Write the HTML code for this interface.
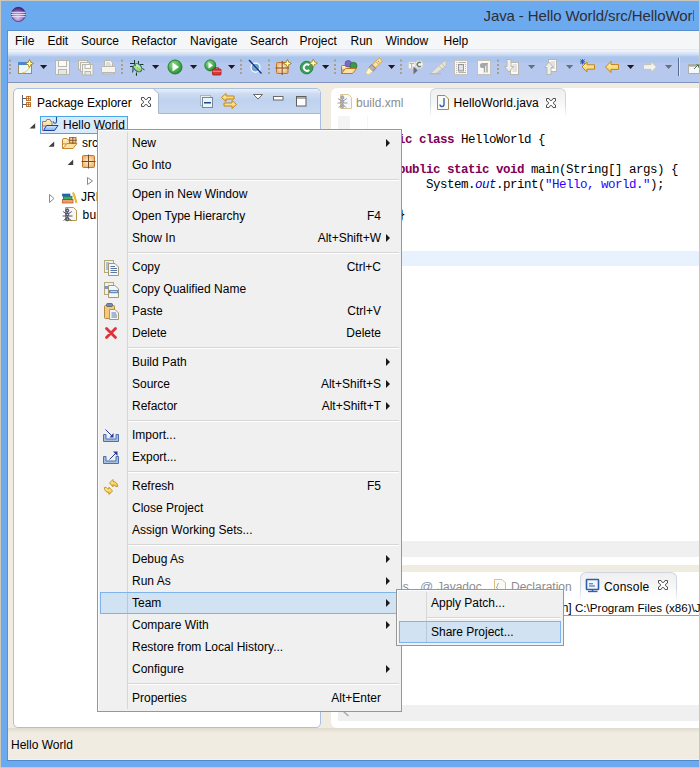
<!DOCTYPE html>
<html><head><meta charset="utf-8">
<style>
*{box-sizing:border-box;margin:0;padding:0}
html,body{width:700px;height:768px;overflow:hidden;background:#f0ece1;font-family:"Liberation Sans",sans-serif;font-size:12px;color:#000}
.a{position:absolute}
svg{display:block;position:absolute;left:0;top:0}
.t{position:absolute;white-space:nowrap;line-height:14px}
#frame{left:0;top:0;width:700px;height:768px;background:#6caaf0;border-top:1px solid #cdc6ba;border-left:1px solid #cdc6ba;border-right:1px solid #cdc6ba;border-bottom:1px solid #cdc6ba}
#title{left:483.5px;top:6.5px;width:210.5px;overflow:hidden;font-size:15px;letter-spacing:-0.1px;line-height:18px;color:#2e2e36}
#client{left:7px;top:30px;width:692px;height:730px;background:#f0ece1;border-top:1px solid #5a8fd0;border-left:1px solid #5a8fd0}
#menubar{left:8px;top:31px;width:691px;height:18px;background:#f5f6f7}
#menubar span{position:absolute;top:3px;white-space:nowrap;line-height:14px}
#toolbar{left:8px;top:49px;width:691px;height:34px;background:linear-gradient(#e6e9ee 0px,#e6e9ee 1px,#f1f4fb 1px,#eef2fb 2px,#c9d9f2 6px,#abc5ec 8px,#abc5ec 13px,#b6c8ed 14px,#b6c8ed 33px,#7f94be 33px)}
#pe{left:13px;top:88px;width:308px;height:640px;background:#fff;border:1px solid #a9c0e4;border-radius:5px}
#pehead{left:158px;top:89px;width:162px;height:25px;background:linear-gradient(#e7eefa 0px,#cfdcf2 6px,#bfd3ef 12px,#c6d6f0 24px);border-bottom:1px solid #a6b6d4;border-radius:0 4px 0 0}
#ed{left:331px;top:88px;width:368px;height:477px;background:#fff;border-radius:6px 0 0 6px}
#con{left:331px;top:572px;width:368px;height:156px;background:#fff;border-radius:6px 0 0 6px}
#menu{left:97px;top:129px;width:305px;height:583px;background:#f0f0f0;border:1px solid #979797;box-shadow:inset 1px 1px 0 #fbfbfb}
.mi{position:absolute;left:132px;white-space:nowrap;line-height:22px;height:22px}
.acc{position:absolute;left:200px;width:181px;text-align:right;white-space:nowrap;line-height:22px;height:22px}
.arr{position:absolute;left:386px;width:0;height:0;border-top:4px solid transparent;border-bottom:4px solid transparent;border-left:4px solid #1a1a1a}
.sep{position:absolute;left:128px;width:271px;height:2px;background:#d7d7d7;border-bottom:1px solid #fff}
#submenu{left:396px;top:589px;width:168px;height:57px;background:#f0f0f0;border:1px solid #979797;box-shadow:inset 1px 1px 0 #fbfbfb}
.hl{position:absolute;background:#d1e2f2;border:1px solid #7eb4ea}
.code{font-family:"Liberation Mono",monospace;font-size:12.5px;letter-spacing:-0.5px;line-height:15px;white-space:pre;position:absolute}
.kw{color:#7f0055;font-weight:bold}
.str{color:#2a00ff}
</style></head><body>
<div class="a" id="frame"></div>
<div class="t" id="title">Java - Hello World/src/HelloWorld.java - Eclipse</div>
<div class="a" style="left:699px;top:0;width:1px;height:768px;background:#cdc6ba"></div>
<div class="a" id="client"></div>
<div class="a" id="menubar">
<span style="left:7px">File</span><span style="left:39.5px">Edit</span><span style="left:73px">Source</span><span style="left:123.5px">Refactor</span><span style="left:182px">Navigate</span><span style="left:242px">Search</span><span style="left:291.5px">Project</span><span style="left:342.5px">Run</span><span style="left:377.5px">Window</span><span style="left:435.5px">Help</span>
</div>
<div class="a" id="toolbar"></div>

<div class="a" id="pe"></div>
<div class="t" style="left:37px;top:96px">Package Explorer</div>
<div class="a" style="left:40px;top:116px;width:88px;height:18px;background:#d7ebfa;border:1px solid #4aa6e6"></div>
<div class="t" style="left:63px;top:118px">Hello World</div>
<div class="t" style="left:82px;top:136px">src</div>
<div class="t" style="left:81px;top:190px">JRE System Library</div>
<div class="t" style="left:82.5px;top:208px;letter-spacing:0.3px">build.xml</div>

<div class="a" id="ed"></div>
<div class="a" style="left:430px;top:88px;width:136px;height:28px;border:1px solid #cfd6e2;border-bottom:none;border-radius:6px 6px 0 0;background:linear-gradient(#efefef,#fff)"></div>
<div class="a" style="left:429px;top:104px;width:138px;height:14px;background:linear-gradient(rgba(255,255,255,0),#fff)"></div>
<div class="a" style="left:338px;top:116px;width:12px;height:425px;background:#f4f4f4"></div>
<div class="a" style="left:367px;top:116px;width:1px;height:425px;background:#f5f5f5"></div>
<div class="t" style="left:356px;top:96px;color:#8c8c8c">build.xml</div>
<div class="t" style="left:453.5px;top:96px;letter-spacing:0.1px">HelloWorld.java</div>
<div class="a" style="left:368px;top:251px;width:331px;height:15px;background:#e8f2fe"></div>
<div class="code" style="left:370px;top:133px"><span class="kw">public class</span> HelloWorld {

    <span class="kw">public static void</span> main(String[] args) {
        System.<i style="color:#0000c0">out</i>.print(<span class="str">"Hello, world."</span>);

    }
}</div>
<div class="a" style="left:332px;top:541px;width:367px;height:16px;background:#f0f0f0"></div>

<div class="a" id="con"></div>
<div class="a" style="left:580px;top:572px;width:97px;height:28px;border:1px solid #cfd6e2;border-bottom:none;border-radius:6px 6px 0 0;background:linear-gradient(#efefef,#fff)"></div>
<div class="a" style="left:579px;top:588px;width:99px;height:14px;background:linear-gradient(rgba(255,255,255,0),#fff)"></div>
<div class="t" style="left:358px;top:580px;color:#8c8c8c">Problems</div>
<div class="t" style="left:420px;top:580px;color:#7f9ab8;font-size:13px">@</div>
<div class="t" style="left:437px;top:580px;color:#8c8c8c">Javadoc</div>
<div class="t" style="left:511px;top:580px;color:#8c8c8c">Declaration</div>
<div class="t" style="left:604px;top:580px;letter-spacing:0.2px">Console</div>
<div class="t" style="left:200px;width:375px;text-align:right;top:601px">&lt;terminated&gt; HelloWorld [Java Application]&nbsp;</div><div class="t" style="left:575px;top:601px;font-size:11.6px">C:\Program Files (x86)\Java\jre7\bin\javaw.exe</div>
<div class="a" style="left:332px;top:615px;width:367px;height:1px;background:#a0a0a0"></div>
<div class="a" style="left:338px;top:705px;width:361px;height:16px;background:#f0f0f0"></div>

<div class="t" style="left:11px;top:738px">Hello World</div>
<div class="a" style="left:0;top:760px;width:700px;height:7px;background:#6caaf0;border-left:1px solid #cdc6ba;border-right:1px solid #cdc6ba"></div>
<div class="a" style="left:7px;top:760px;width:692px;height:1px;background:#4f88cc"></div>
<div class="a" style="left:0;top:767px;width:700px;height:1px;background:#cdc6ba"></div>
<div class="a" style="left:8px;top:759px;width:691px;height:1px;background:#f8f1e4"></div>
<div class="a" style="left:8px;top:728px;width:691px;height:5px;background:linear-gradient(#dfdbcf,#f0ece1)"></div>

<svg width="700" height="768" viewBox="0 0 700 768">
<defs>
<radialGradient id="ecl" cx="0.45" cy="0.75" r="0.75"><stop offset="0" stop-color="#d8c4ee"/><stop offset="0.6" stop-color="#8a64bd"/><stop offset="1" stop-color="#3c1f6e"/></radialGradient>
<radialGradient id="grn" cx="0.4" cy="0.35" r="0.7"><stop offset="0" stop-color="#8fe08f"/><stop offset="1" stop-color="#1f8a2a"/></radialGradient>
<linearGradient id="fold" x1="0" y1="0" x2="0" y2="1"><stop offset="0" stop-color="#fff3c8"/><stop offset="1" stop-color="#f2c470"/></linearGradient>
<linearGradient id="arrY" x1="0" y1="0" x2="0" y2="1"><stop offset="0" stop-color="#fff8c0"/><stop offset="1" stop-color="#f6c64a"/></linearGradient>
<g id="grip"><rect x="0" y="0" width="2" height="2"/><rect x="0" y="4.5" width="2" height="2"/><rect x="0" y="8.5" width="2" height="2"/><rect x="0" y="12.5" width="2" height="2"/></g>
<g id="spark"><path d="M0,-4 L1.3,-1.3 L4,0 L1.3,1.3 L0,4 L-1.3,1.3 L-4,0 L-1.3,-1.3Z" fill="#f8e070" stroke="#a07a10" stroke-width="0.8"/><path d="M0,-2.5V2.5M-2.5,0H2.5" stroke="#fff" stroke-width="0.9"/></g>
<g id="closex"><path d="M0.5,0.5H3L4.3,2.5H5.7L7,0.5H9.5V3L7.5,4.3V5.7L9.5,7V9.5H7L5.7,7.5H4.3L3,9.5H0.5V7L2.5,5.7V4.3L0.5,3Z" fill="#fff" stroke="#505050" stroke-width="1"/></g>
</defs>
<!-- eclipse logo -->
<circle cx="18.4" cy="14.4" r="7.1" fill="url(#ecl)" stroke="#3a2068" stroke-width="0.7"/>
<rect x="11.3" y="11.8" width="14.2" height="1.1" fill="#efe6fa" opacity="0.9"/>
<rect x="11.1" y="13.9" width="14.6" height="1.1" fill="#efe6fa" opacity="0.9"/>
<rect x="11.4" y="16.1" width="14" height="1.1" fill="#efe6fa" opacity="0.9"/>
<!-- grips -->
<g fill="#a99f86">
<use href="#grip" x="9" y="59.5"/><use href="#grip" x="121" y="59.5"/><use href="#grip" x="240" y="59.5"/><use href="#grip" x="268" y="59.5"/><use href="#grip" x="334" y="59.5"/><use href="#grip" x="400" y="59.5"/><use href="#grip" x="497" y="59.5"/>
</g>
<!-- new wizard -->
<rect x="18.5" y="62.5" width="13" height="11" fill="#eaf7fd" stroke="#a08a58"/>
<rect x="18" y="62" width="9" height="3" fill="#4a88c6"/>
<path d="M22,73 Q29,72 29.5,65" fill="none" stroke="#f0c850" stroke-width="1"/>
<use href="#spark" x="29.5" y="63.5"/>
<!-- dropdowns -->
<g fill="#1c1c1c">
<path d="M40,65H47.2L43.6,69Z"/><path d="M152,65H159.2L155.6,69Z"/><path d="M190,65H197.2L193.6,69Z"/><path d="M228,65H235.2L231.6,69Z"/><path d="M322,65H329.2L325.6,69Z"/><path d="M388,65H395.2L391.6,69Z"/><path d="M627,65H634.2L630.6,69Z"/>
</g>
<g fill="#6a6f7a">
<path d="M528,65H535.2L531.6,69Z"/><path d="M566,65H573.2L569.6,69Z"/><path d="M665,65H672.2L668.6,69Z"/>
</g>
<!-- save disabled -->
<g fill="#f4f4f2" stroke="#b9b6ad" stroke-width="1">
<rect x="55.5" y="60.5" width="14" height="14"/>
<rect x="58.5" y="60.5" width="8" height="6" fill="#fafafa"/>
<rect x="58.5" y="69.5" width="8" height="5" fill="#e6e6e3"/>
</g>
<!-- save all -->
<g fill="#f4f4f2" stroke="#b9b6ad" stroke-width="1">
<rect x="78.5" y="60.5" width="9" height="9"/>
<rect x="80.5" y="62.5" width="9" height="9"/>
<rect x="82.5" y="64.5" width="10.5" height="10.5"/>
<rect x="85" y="64.5" width="5.5" height="4" fill="#fafafa"/>
<rect x="85" y="71.5" width="5.5" height="3.5" fill="#e6e6e3"/>
</g>
<!-- print -->
<g fill="#f4f4f2" stroke="#b9b6ad" stroke-width="1">
<path d="M104.5,67.5V60.5H110.5L112.5,62.5V67.5"/>
<rect x="101.5" y="66.5" width="14" height="6" rx="1"/>
<rect x="102.5" y="72.5" width="12" height="1.5" fill="#dedcd5"/>
<path d="M106,63H110M106,65H111" stroke="#c8c6bf"/>
</g>
<!-- debug bug -->
<defs><linearGradient id="bugg" x1="0" y1="0" x2="1" y2="1"><stop offset="0" stop-color="#f0fcd0"/><stop offset="1" stop-color="#7cc040"/></linearGradient></defs>
<g stroke="#1a3a28" stroke-width="1" fill="none">
<path d="M134.5,60V64M130,63.5H134.5M138.5,61V64.5M130,66.5H133V71.5L132,72.3M136.5,72.5V75.5L135.8,74.8M140,64.5H143.5M142.5,68.5L144.5,69.8"/>
</g>
<ellipse cx="137.8" cy="67.8" rx="4.6" ry="3.4" transform="rotate(45 137.8 67.8)" fill="url(#bugg)" stroke="#1a6a88" stroke-width="1"/>
<circle cx="135.3" cy="65.2" r="0.8" fill="#2a7a30"/>
<path d="M137.5,67.5L140.5,70.5" stroke="#70b040" stroke-width="0.8" stroke-dasharray="1 0.8"/>
<!-- run -->
<circle cx="175" cy="67" r="7" fill="url(#grn)" stroke="#1f7a2a" stroke-width="0.9"/>
<path d="M172.5,62.5V71.5L179,67Z" fill="#fff"/>
<!-- external tools -->
<circle cx="210.3" cy="65.4" r="5.5" fill="url(#grn)" stroke="#1f7a2a" stroke-width="0.9"/>
<path d="M208.5,62.3V68.5L213,65.4Z" fill="#fff"/>
<rect x="212.5" y="69" width="8.5" height="6" rx="1" fill="#d83a3a" stroke="#a01818" stroke-width="0.8"/>
<path d="M215,69V67.8H218.5V69" fill="none" stroke="#a01818" stroke-width="0.9"/>
<path d="M212.5,71.3H221" stroke="#f8b0b0" stroke-width="0.7"/>
<!-- skip breakpoints -->
<circle cx="255.5" cy="67.6" r="4.5" fill="#6fa6c8" stroke="#fff" stroke-width="1.2"/>
<path d="M249,60L261.5,73.5" stroke="#1a2a90" stroke-width="1.3"/>
<!-- new package -->
<g>
<rect x="276.5" y="62.5" width="11.5" height="11" rx="1" fill="url(#pkg)" stroke="#c27430" stroke-width="1"/>
<path d="M282.2,61V75M275.5,68H289" stroke="#7a4a2a" stroke-width="1"/>
<use href="#spark" x="287.5" y="63.5"/>
</g>
<!-- new class -->
<circle cx="306.6" cy="67.6" r="6.3" fill="#3aa05a" stroke="#2a7a3a" stroke-width="0.9"/>
<path d="M309.2,65.3A3.2,3.2 0 1 0 309.2,70" fill="none" stroke="#fff" stroke-width="1.9"/>
<use href="#spark" x="313.3" y="63.2"/>
<!-- open type -->
<path d="M341.5,73.5V66.5Q341.5,65.5 342.5,65.5H345L346,66.5H350V70H341.5Z" fill="url(#fold)" stroke="#c07820" stroke-width="1"/>
<circle cx="348.3" cy="63.8" r="3.3" fill="#7a6ac8" stroke="#5a4aa0" stroke-width="0.7"/>
<circle cx="353.5" cy="65.8" r="3.5" fill="#3a9a4a" stroke="#2a6a32" stroke-width="0.7"/>
<path d="M341.5,73.5L345.5,68.5H356.5L352.5,73.5Z" fill="#fce2a0" stroke="#c07820" stroke-width="1"/>
<!-- search flashlight -->
<g transform="translate(373.8,66.5) rotate(-45)">
<rect x="0" y="-2.2" width="10" height="4.4" rx="1" fill="#fde6a0" stroke="#e09a20" stroke-width="0.9"/>
<rect x="-4.2" y="-2.8" width="4.2" height="5.6" fill="#b4b0bc" stroke="#7a7090" stroke-width="0.8"/>
<path d="M-4.2,-2.8L-10,-1.2V2L-4.2,2.8Z" fill="#fffad0" stroke="#e8c050" stroke-width="0.7"/>
<path d="M5,-0.8V0.8M7,-0.8V0.8" stroke="#2a3a90" stroke-width="0.7"/>
</g>
<!-- disabled group -->
<rect x="408.5" y="62" width="7" height="6.5" rx="1" fill="#f6f6f4" stroke="#d0cec6" stroke-width="0.8"/>
<path d="M409.5,63.5H414M411.7,63.5V68" stroke="#b8b6ae" stroke-width="1.1"/>
<circle cx="419" cy="64.5" r="4" fill="#f4f4f0" stroke="#cfcdc5" stroke-width="0.8"/>
<path d="M420.8,63A2.1,2.1 0 1 0 420.8,66" fill="none" stroke="#6a8070" stroke-width="1.5"/>
<path d="M413.5,66.3V74.5L417.6,70.4Z" fill="#6e6e6e"/>
<path d="M430.5,73.5L440,64.5L446,60.3L445.8,66L436,73.5Z" fill="#e6e4d4" stroke="#c2c0b2" stroke-width="0.8"/>
<path d="M439,66L444,71M441.5,63.5L445.5,67.5" stroke="#b8b6a8" stroke-width="0.7"/>
<path d="M429.5,73.8H441" stroke="#b4b2a6" stroke-width="0.9"/>
<rect x="454.5" y="60.5" width="13" height="14" fill="#f8f8f6" stroke="#c4c2ba" stroke-width="1"/>
<g fill="#a0a0a0"><circle cx="456.7" cy="62.5" r="0.5"/><circle cx="456.7" cy="64.5" r="0.5"/><circle cx="456.7" cy="66.5" r="0.5"/><circle cx="456.7" cy="68.5" r="0.5"/><circle cx="456.7" cy="70.5" r="0.5"/><circle cx="456.7" cy="72.5" r="0.5"/><circle cx="465.5" cy="64.5" r="0.5"/><circle cx="465.5" cy="66.5" r="0.5"/><circle cx="465.5" cy="68.5" r="0.5"/><circle cx="465.5" cy="70.5" r="0.5"/></g>
<path d="M458.5,62.5H466M458.5,72.5H466" stroke="#a8a8a8" stroke-width="0.9"/>
<rect x="458.5" y="64.5" width="5" height="6.5" fill="#d8d8d8" stroke="#909090" stroke-width="0.9"/>
<path d="M459,66.5H463M459,68.5H463" stroke="#f0f0f0" stroke-width="0.8"/>
<rect x="477.5" y="60.5" width="13" height="14" fill="#f8f8f6" stroke="#c4c2ba" stroke-width="1"/>
<path d="M487.8,63.5H482.5A2,2 0 0 0 482.5,67.5H484" fill="#a8a8a8" stroke="#a8a8a8" stroke-width="1.2"/>
<path d="M484.5,63V72.5M487,63V72.5" stroke="#a4a4a4" stroke-width="1.4"/>
<!-- next/prev annotation -->
<g>
<rect x="510.5" y="62.5" width="8" height="12" fill="#fafaf8" stroke="#b8b6ae"/>
<path d="M512.5,65H517M512.5,67H517M512.5,69H517M512.5,71H517" stroke="#c0beb6" stroke-width="0.8"/>
<path d="M507,59.5H511V66.5H513.5L509,72L504.5,66.5H507Z" fill="#eeeeea" stroke="#b4b2aa" stroke-width="0.9"/>
<rect x="548.5" y="59.5" width="8" height="12" fill="#fafaf8" stroke="#b8b6ae"/>
<path d="M550.5,62H555M550.5,64H555M550.5,66H555M550.5,68H555" stroke="#c0beb6" stroke-width="0.8"/>
<path d="M547,74.5H551V67.5H553.5L549,62L544.5,67.5H547Z" fill="#eeeeea" stroke="#b4b2aa" stroke-width="0.9"/>
</g>
<!-- last edit / back / forward -->
<path d="M582,67L587,62V64.8H594.5V69.2H587V72Z" fill="url(#arrY)" stroke="#c08418" stroke-width="1"/>
<path d="M580.5,59.5L584.5,64M584.5,59.5L580.5,64M582.5,59V64.5M580,61.8H585" stroke="#2050b0" stroke-width="0.9"/>
<path d="M605.5,67L611,61.5V64.6H618.5V69.4H611V72.5Z" fill="url(#arrY)" stroke="#c08418" stroke-width="1"/>
<path d="M656.5,67L651,61.5V64.6H643.5V69.4H651V72.5Z" fill="#f2f2ee" stroke="#c4c2b8" stroke-width="1"/>
<!-- separator & perspective -->
<rect x="678" y="58" width="1" height="18" fill="#5a6a8a"/>
<rect x="679" y="58" width="1" height="18" fill="#dce6f6"/>
<rect x="688.5" y="64.5" width="11" height="9" fill="#f8f8f8" stroke="#b0aea6"/>
<rect x="689" y="65" width="7" height="1.6" fill="#9aa8b8"/>
<path d="M694,69L698,65M696,65H698.5V67.5" stroke="#3a6a3a" stroke-width="0.9" fill="none"/>

<!-- package explorer header -->
<defs><linearGradient id="pehg" x1="0" y1="0" x2="0" y2="1"><stop offset="0" stop-color="#e9effa"/><stop offset="0.2" stop-color="#cddcf2"/><stop offset="0.45" stop-color="#bed2ef"/><stop offset="1" stop-color="#c8d8f1"/></linearGradient></defs>
<path d="M154,89 L158.5,93.5 V113 H320 V94 Q320,89 315,89 Z" fill="url(#pehg)"/>
<path d="M153.5,88.8 L158.5,93.8 V113.5 H320" fill="none" stroke="#a9b6cf" stroke-width="1"/>
<path d="M22.5,95V108M22.5,98.5H26M22.5,104.5H26" stroke="#5a6478" stroke-width="1" fill="none"/>
<g fill="#b86a28"><rect x="26" y="96" width="5" height="5" rx="0.6"/><rect x="26" y="102" width="5" height="5" rx="0.6"/></g>
<g fill="#fff6b0"><circle cx="27.5" cy="97.5" r="0.65"/><circle cx="29.5" cy="97.5" r="0.65"/><circle cx="27.5" cy="99.5" r="0.65"/><circle cx="29.5" cy="99.5" r="0.65"/><circle cx="27.5" cy="103.5" r="0.65"/><circle cx="29.5" cy="103.5" r="0.65"/><circle cx="27.5" cy="105.5" r="0.65"/><circle cx="29.5" cy="105.5" r="0.65"/></g>
<use href="#closex" x="141" y="97"/>
<!-- collapse all -->
<rect x="200.5" y="95.5" width="10" height="10" fill="#e4eef6" stroke="#a8b4c0"/>
<rect x="202.5" y="97.5" width="10" height="10" fill="#eaf6fc" stroke="#7a8698"/>
<rect x="204" y="102" width="7" height="1.5" fill="#1a4a8a"/>
<!-- link with editor -->
<path d="M221.5,97.5L226,93.5V96H234V99H226V101.5Z" fill="url(#arrY)" stroke="#c08418" stroke-width="1"/>
<path d="M236.5,104.5L232,100.5V103H224V106H232V108.5Z" fill="url(#arrY)" stroke="#c08418" stroke-width="1"/>
<!-- view menu / min / max -->
<path d="M253.5,94.5H262.5L258,99Z" fill="#fff" stroke="#6a6a6a" stroke-width="1"/>
<rect x="273.5" y="96.5" width="9.5" height="3.5" fill="#fff" stroke="#6a6a6a" stroke-width="1"/>
<rect x="296.5" y="96.5" width="9.5" height="9.5" fill="#fff" stroke="#5e5e5e" stroke-width="1"/>
<rect x="296.5" y="97.5" width="9.5" height="1" fill="#5e5e5e"/>
<!-- tree -->
<g fill="#404040"><path d="M35.2,123.2V128.6H29.6Z"/><path d="M54.2,141.4V146.8H48.6Z"/><path d="M73.2,159.6V165H67.6Z"/></g>
<g fill="#fff" stroke="#8a8a8a" stroke-width="1"><path d="M87.5,177.5L92.5,181L87.5,184.5Z"/><path d="M49.5,194.5L54,198.5L49.5,202.5Z"/></g>
<!-- project icon -->
<defs><linearGradient id="flapB" x1="0" y1="0" x2="0" y2="1"><stop offset="0" stop-color="#d0ecfc"/><stop offset="1" stop-color="#7ab0ec"/></linearGradient></defs>
<path d="M42.5,130.5V121.5H46L46.8,119.5H50L50.8,121.5H52V126H42.5Z" fill="url(#fold)" stroke="#9a7a7a" stroke-width="1"/>
<path d="M43.5,130.5L46.5,125.5H58L54.5,130.5Z" fill="url(#flapB)" stroke="#2040b0" stroke-width="1"/>
<path d="M56.5,117V121.5Q56.5,123.3 55,123.3Q53.5,123.3 53.5,121.5" fill="none" stroke="#1f4fa0" stroke-width="1.1"/>
<!-- src icon -->
<defs><radialGradient id="pkg" cx="0.5" cy="0.5" r="0.6"><stop offset="0" stop-color="#fff4d0"/><stop offset="1" stop-color="#e8b070"/></radialGradient></defs>
<path d="M62.5,148.5V140Q62.5,138.5 64,138.5H67L68,140H72V144H62.5Z" fill="url(#fold)" stroke="#c88830" stroke-width="1"/>
<path d="M62.5,148.5L67,143.5H77L73,148.5Z" fill="#fce2a0" stroke="#c88830" stroke-width="1"/>
<rect x="69.5" y="137.5" width="6.5" height="5.5" fill="url(#pkg)" stroke="#a86a30" stroke-width="0.9"/>
<path d="M72.8,137V143.8M68.8,140.3H76.8" stroke="#7a4a20" stroke-width="0.9"/>
<!-- package icon -->
<rect x="82.5" y="155.5" width="12" height="12" rx="1" fill="url(#pkg)" stroke="#c27430" stroke-width="1"/>
<path d="M88.5,154.5V168.5M81.5,161.5H95.5" stroke="#7a4a28" stroke-width="1"/>
<!-- JRE library -->
<rect x="62.5" y="199.5" width="10.5" height="3.5" fill="#e8a070" stroke="#c05a20" stroke-width="0.8"/>
<rect x="63.5" y="196.3" width="8.5" height="3.2" fill="#40a860" stroke="#207a40" stroke-width="0.8"/>
<rect x="62.5" y="194" width="7.5" height="2" fill="#2070c8" stroke="#1050a0" stroke-width="0.6"/>
<path d="M73,192.5Q75,197 76.5,203" fill="none" stroke="#f0a820" stroke-width="2"/>
<path d="M73,192.5Q75,197 76.5,203" fill="none" stroke="#ffd860" stroke-width="0.8" stroke-dasharray="1 1"/>
<!-- ant build.xml -->
<path d="M65.5,207.5H73.5L76.5,210.5V220.5H65.5Z" fill="#f4f6fb" stroke="#b89848" stroke-width="1"/>
<g stroke="#303030" stroke-width="0.8" fill="none"><path d="M62.5,216H72.5M63,211.5L67.3,214.5L71.8,211.5M63.5,220.5L67.3,217.5L71.3,220.5"/></g>
<g fill="#5a5a78" stroke="#3a3a50" stroke-width="0.5"><ellipse cx="67.3" cy="210.5" rx="1.6" ry="1.9"/><ellipse cx="67.3" cy="214.5" rx="1.5" ry="1.8"/><ellipse cx="67.3" cy="219" rx="1.6" ry="2"/></g>
<g fill="#fff"><circle cx="67.3" cy="210.5" r="0.6"/><circle cx="67.3" cy="214.5" r="0.6"/><circle cx="67.3" cy="219" r="0.6"/></g>

<!-- editor tabs -->
<g opacity="0.7">
<path d="M340.5,94.5H348.5L351.5,97.5V108.5H340.5Z" fill="#f4f6fb" stroke="#c8b070" stroke-width="1"/>
<g stroke="#505050" stroke-width="0.8" fill="none"><path d="M337.5,103H347.5M338,98.5L342.3,101.5L346.8,98.5M338.5,107.5L342.3,104.5L346.3,107.5"/></g>
<g fill="#8a8aa0" stroke="#5a5a70" stroke-width="0.5"><ellipse cx="342.3" cy="97.5" rx="1.6" ry="1.9"/><ellipse cx="342.3" cy="101.5" rx="1.5" ry="1.8"/><ellipse cx="342.3" cy="106" rx="1.6" ry="2"/></g>
</g>
<path d="M437.5,95.5H445L448.5,99V109.5H437.5Z" fill="#fafaf6" stroke="#a08a58" stroke-width="1"/>
<path d="M444,98V104.5A2,2 0 0 1 440,104.5" fill="none" stroke="#2a5aa8" stroke-width="1.3"/>
<use href="#closex" x="546" y="98"/>
<!-- console tabs -->
<path d="M494.5,579.5H502L505.5,583V592H494.5Z" fill="#fafaf6" stroke="#d8c088" stroke-width="1"/>
<path d="M499,583.5Q497,583.5 497.5,585.5Q497.5,587 496,587.3Q497.5,587.6 497.5,589Q497,591 499,591" fill="none" stroke="#8aa8c8" stroke-width="0.9"/>
<rect x="586.5" y="579.5" width="12" height="10" rx="0.5" fill="#f0f6fc" stroke="#2f5fa8" stroke-width="1.6"/>
<path d="M589,583.8H593M589,586H595" stroke="#2f5fa8" stroke-width="1"/>
<path d="M588,591.5H597.5" stroke="#2f5fa8" stroke-width="1.3"/>
<path d="M592.5,589.5V591" stroke="#2f5fa8" stroke-width="1.5"/>
<use href="#closex" x="658" y="580"/>
<path d="M343.5,711.5L348.5,716" stroke="#a8a8a8" stroke-width="1.4"/>
</svg>

<div class="a" id="menu"></div>
<div class="a" style="left:127px;top:132px;width:1px;height:577px;background:#d7d7d7"></div>
<div class="mi" style="top:132px">New</div>
<div class="arr" style="top:139px"></div>
<div class="mi" style="top:154px">Go Into</div>
<div class="sep" style="top:179px"></div>
<div class="mi" style="top:183px">Open in New Window</div>
<div class="mi" style="top:205px">Open Type Hierarchy</div>
<div class="acc" style="top:205px">F4</div>
<div class="mi" style="top:227px">Show In</div>
<div class="acc" style="top:227px">Alt+Shift+W</div>
<div class="arr" style="top:234px"></div>
<div class="sep" style="top:252px"></div>
<div class="mi" style="top:256px">Copy</div>
<div class="acc" style="top:256px">Ctrl+C</div>
<div class="mi" style="top:278px">Copy Qualified Name</div>
<div class="mi" style="top:300px">Paste</div>
<div class="acc" style="top:300px">Ctrl+V</div>
<div class="mi" style="top:322px">Delete</div>
<div class="acc" style="top:322px">Delete</div>
<div class="sep" style="top:347px"></div>
<div class="mi" style="top:351px">Build Path</div>
<div class="arr" style="top:358px"></div>
<div class="mi" style="top:373px">Source</div>
<div class="acc" style="top:373px">Alt+Shift+S</div>
<div class="arr" style="top:380px"></div>
<div class="mi" style="top:395px">Refactor</div>
<div class="acc" style="top:395px">Alt+Shift+T</div>
<div class="arr" style="top:402px"></div>
<div class="sep" style="top:420px"></div>
<div class="mi" style="top:424px">Import...</div>
<div class="mi" style="top:446px">Export...</div>
<div class="sep" style="top:471px"></div>
<div class="mi" style="top:475px">Refresh</div>
<div class="acc" style="top:475px">F5</div>
<div class="mi" style="top:497px">Close Project</div>
<div class="mi" style="top:519px">Assign Working Sets...</div>
<div class="sep" style="top:544px"></div>
<div class="mi" style="top:548px">Debug As</div>
<div class="arr" style="top:555px"></div>
<div class="mi" style="top:570px">Run As</div>
<div class="arr" style="top:577px"></div>
<div class="hl" style="left:100px;top:592px;width:301px;height:22px"></div>
<div class="a" style="left:127px;top:593px;width:1px;height:20px;background:#b9c9d9"></div>
<div class="mi" style="top:592px">Team</div>
<div class="arr" style="top:599px"></div>
<div class="mi" style="top:614px">Compare With</div>
<div class="arr" style="top:621px"></div>
<div class="mi" style="top:636px">Restore from Local History...</div>
<div class="mi" style="top:658px">Configure</div>
<div class="arr" style="top:665px"></div>
<div class="sep" style="top:683px"></div>
<div class="mi" style="top:687px">Properties</div>
<div class="acc" style="top:687px">Alt+Enter</div>
<svg width="700" height="768" viewBox="0 0 700 768" style="pointer-events:none">
<!-- copy -->
<g>
<rect x="104.5" y="260.5" width="9" height="12" fill="#e8f0f8" stroke="#b8a878" stroke-width="1"/>
<path d="M106,263H109M106,265H109M106,267H109M106,269H109" stroke="#5a7aa8" stroke-width="0.8"/>
<path d="M108.5,263.5H115L118.5,267V275.5H108.5Z" fill="#f0f6fc" stroke="#a89868" stroke-width="1"/>
<path d="M110.5,266.5H115M110.5,268.5H117M110.5,270.5H117M110.5,272.5H117" stroke="#4a6a98" stroke-width="0.9"/>
</g>
<!-- cqn -->
<g>
<rect x="104.5" y="282.5" width="9" height="12" fill="#e8f0f8" stroke="#b8a878" stroke-width="1"/>
<rect x="104.5" y="286" width="9" height="3" fill="#7a9ac0"/>
<path d="M108.5,285.5H115L118.5,289V297.5H108.5Z" fill="#f0f6fc" stroke="#a89868" stroke-width="1"/>
<rect x="109" y="290" width="9.5" height="3.2" fill="#6a8ab8"/>
<path d="M110.5,291.5H117" stroke="#dce8f4" stroke-width="0.8"/>
</g>
<!-- paste -->
<g>
<rect x="104.5" y="305.5" width="10" height="13" rx="1" fill="#f6c878" stroke="#b08840" stroke-width="1"/>
<rect x="106.5" y="303.5" width="6" height="3" rx="1" fill="#7a8aa8" stroke="#4a5a78" stroke-width="0.8"/>
<path d="M109.5,309.5H115L118.5,313V319.5H109.5Z" fill="#f0f6fc" stroke="#a89868" stroke-width="1"/>
<path d="M111.5,313H116M111.5,315H117M111.5,317H117" stroke="#4a6a98" stroke-width="0.9"/>
</g>
<!-- delete -->
<path d="M106.5,328.5L111,333L115.5,328.5M106.5,337.5L111,333L115.5,337.5" fill="none" stroke="#e0303a" stroke-width="2.8" stroke-linecap="round"/>
<!-- import -->
<path d="M103.5,434.5V441.5H118.5V434.5H116V439H106V434.5Z" fill="#a8bee0" stroke="#4a70b0" stroke-width="1"/>
<path d="M105.5,429.5L112.5,436.5" stroke="#2a3a98" stroke-width="1"/>
<path d="M113.5,437.5L113.5,433L109.5,437.5Z" fill="#2a3a98"/>
<!-- export -->
<path d="M103.5,456.5V463.5H118.5V456.5H116V461H106V456.5Z" fill="#a8bee0" stroke="#4a70b0" stroke-width="1"/>
<path d="M109.5,459.5L116,453" stroke="#2a3a98" stroke-width="1"/>
<path d="M117.5,451.5L113,451.5L117.5,456Z" fill="#2a3a98"/>
<!-- refresh -->
<defs><linearGradient id="refg" x1="0" y1="0" x2="0" y2="1"><stop offset="0" stop-color="#fff6c0"/><stop offset="1" stop-color="#eebc30"/></linearGradient></defs>
<path d="M109.5,483 L113,479.5 V481.5 Q117,481.5 117.8,486.3 L116,486.8 Q115,484.8 113,485 V486.8 Z" fill="url(#refg)" stroke="#c48a10" stroke-width="0.9" stroke-linejoin="round"/>
<path d="M112.5,491 L109,494.5 V492.5 Q105,492.5 104.2,487.7 L106,487.2 Q107,489.2 109,489 V487.2 Z" fill="url(#refg)" stroke="#c48a10" stroke-width="0.9" stroke-linejoin="round"/>
</svg>
<div class="a" id="submenu"></div>
<div class="a" style="left:426px;top:592px;width:1px;height:51px;background:#d7d7d7"></div>
<div class="mi" style="left:431px;top:592px">Apply Patch...</div>
<div class="sep" style="left:427px;width:133px;top:617px"></div>
<div class="hl" style="left:399px;top:621px;width:162px;height:22px"></div>
<div class="a" style="left:426px;top:622px;width:1px;height:20px;background:#b9c9d9"></div>
<div class="mi" style="left:431px;top:621px">Share Project...</div>
</body></html>
